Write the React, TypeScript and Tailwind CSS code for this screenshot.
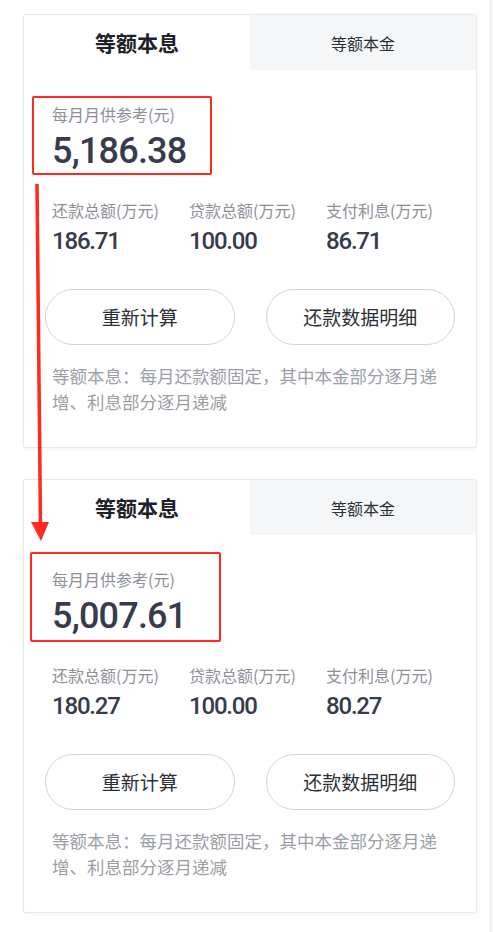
import React from "react";

type Plan = {
	monthly: string;
	total: string;
	loan: string;
	interest: string;
};

const plans: Plan[] = [
	{ monthly: "5,186.38", total: "186.71", loan: "100.00", interest: "86.71" },
	{ monthly: "5,007.61", total: "180.27", loan: "100.00", interest: "80.27" },
];

const cjk = "font-['Noto_Sans_CJK_SC','Noto_Sans',sans-serif]";
const num = "font-['Roboto','Noto_Sans_CJK_SC',sans-serif]";

const ResultCard = ({ plan }: { plan: Plan }) => {
	return (
		<div className="w-[454px] bg-white border border-[#e8e9ec] rounded-[3px] shadow-[0_1px_4px_rgba(0,0,0,0.05)] overflow-hidden">
			<div className="flex h-[55px]">
				<div className="flex-1 flex items-center justify-center bg-white text-[21px] font-bold text-[#1d2129]">
					等额本息
				</div>
				<div className="flex-1 flex items-center justify-center bg-[#f5f6f8] text-[16px] text-[#2b2f36]">
					等额本金
				</div>
			</div>
			<div className="px-[28px] pt-[32px] pb-[32px]">
				<p className="text-[16px] leading-[24px] text-[#8c9099]">每月月供参考(元)</p>
				<p
					className={`${num} mt-[5px] text-[36px] leading-[40px] font-medium tracking-[-0.8px] text-[#363c4b]`}
				>
					{plan.monthly}
				</p>
				<div className="grid grid-cols-[137px_137px_1fr] mt-[27px]">
					{[
						["还款总额(万元)", plan.total],
						["贷款总额(万元)", plan.loan],
						["支付利息(万元)", plan.interest],
					].map(([label, value]) => (
						<div key={label}>
							<p className="text-[16px] leading-[24px] text-[#8c9099]">{label}</p>
							<p
								className={`${num} mt-[5px] text-[24px] leading-[28px] font-medium tracking-[-1.2px] text-[#363c4b]`}
							>
								{value}
							</p>
						</div>
					))}
				</div>
				<div className="grid grid-cols-2 gap-[31px] mx-[-7px] mt-[34px]">
					<button className="h-[56px] rounded-full border border-[#d4d4d6] bg-white text-[19px] text-[#2b2f36]">
						重新计算
					</button>
					<button className="h-[56px] rounded-full border border-[#d4d4d6] bg-white text-[19px] text-[#2b2f36]">
						还款数据明细
					</button>
				</div>
				<p className="mt-[18px] text-[17.5px] leading-[26px] text-[#9b9ea5]">
					等额本息：每月还款额固定，其中本金部分逐月递增、利息部分逐月递减
				</p>
			</div>
		</div>
	);
};

export default function App() {
	return (
		<div className={`${cjk} relative flex min-h-[932px] w-[493px] bg-white`}>
			<div className="flex-1 flex flex-col gap-[31px] pl-[23px] pt-[14px]">
				{plans.map((plan) => (
					<ResultCard key={plan.monthly} plan={plan} />
				))}
			</div>
			<div className="w-[4px] bg-[#f3f3f4]" />

			{/* annotation overlay */}
			<div className="absolute left-[32px] top-[96px] w-[180px] h-[79px] border-[2.5px] border-[#ff2a1f] rounded-[2px] pointer-events-none" />
			<div className="absolute left-[30px] top-[552px] w-[191px] h-[90px] border-[2.5px] border-[#ff2a1f] rounded-[2px] pointer-events-none" />
			<svg
				className="absolute left-0 top-0 pointer-events-none"
				width="493"
				height="932"
				viewBox="0 0 493 932"
			>
				<line x1="37" y1="184" x2="40.5" y2="526" stroke="#ff2a1f" strokeWidth="3.5" />
				<polygon points="31,522 49,522 41,541" fill="#ff2a1f" />
			</svg>
		</div>
	);
}
